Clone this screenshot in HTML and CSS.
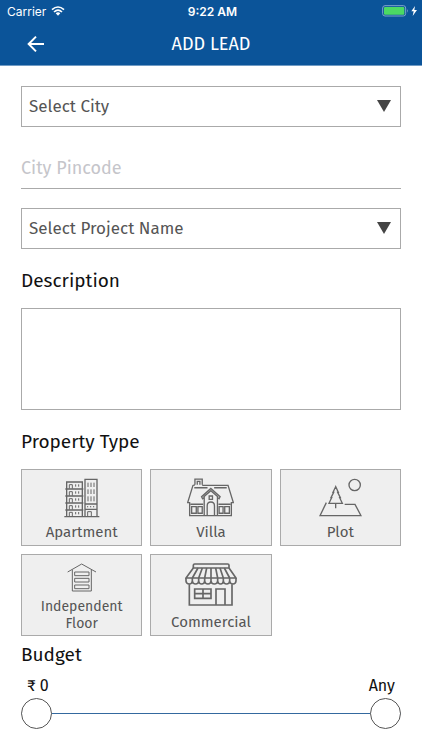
FILE: index.html
```
<!DOCTYPE html>
<html lang="en">
<head>
    <meta charset="UTF-8">
    <meta name="viewport" content="width=device-width, initial-scale=1.0">
    <title>Add Lead</title>
    <link rel="stylesheet" href="styles.css">
</head>
<body>
    <header class="app-header">
        <div class="status-bar">
            <div class="status-left">
                <span>Carrier</span>
                <svg class="wifi-icon" viewBox="0 0 42 30" aria-hidden="true">
                    <path d="M3 11 Q21 -5 39 11 M9 18 Q21 7 33 18" fill="none" stroke="#fff" stroke-width="5"/>
                    <path d="M14 22 Q21 16 28 22 L21 29 Z" fill="#fff"/>
                </svg>
            </div>
            <span class="status-time">9:22 AM</span>
            <div class="status-right">
                <svg class="battery-icon" viewBox="0 0 108 36" aria-hidden="true">
                    <rect x="2" y="2" width="69" height="31" rx="7" fill="none" stroke="#7fa3cc" stroke-width="3"/>
                    <rect x="6" y="6" width="61" height="23" rx="3" fill="#4cd964"/>
                    <path d="M75 12 Q80 17 75 23 Z" fill="#7fa3cc"/>
                    <path d="M99 3 L88 19 H95 L92 33 L105 15 H97 Z" fill="#fff"/>
                </svg>
            </div>
        </div>
        <div class="title-bar">
            <button type="button" class="back-button" aria-label="Back">
                <svg viewBox="0 0 54 54" aria-hidden="true">
                    <path d="M51 27 H5 M27 5 L5 27 L27 49" fill="none" stroke="#fff" stroke-width="6"/>
                </svg>
            </button>
            <h1>ADD LEAD</h1>
        </div>
    </header>

    <form class="lead-form">
        <select class="select-box" aria-label="City">
            <option>Select City</option>
        </select>
        <input class="pincode" type="text" placeholder="City Pincode" aria-label="City Pincode">
        <select class="select-box" aria-label="Project Name">
            <option>Select Project Name</option>
        </select>

        <label class="section-title" for="description">Description</label>
        <textarea class="description" id="description"></textarea>

        <h2 class="section-title">Property Type</h2>
        <div class="type-grid">
            <button type="button" class="type-card">
                <svg class="icon-apartment" viewBox="0 0 108 120" aria-hidden="true">
                    <path d="M8 116 V12 H55 V116 M63 116 V4 H99 V116"/>
                    <path d="M1 116 H106 M4 33 H58 M4 54 H58 M4 75 H58 M4 96 H58 M63 78 H99 M63 94 H99"/>
                    <path class="thin" d="M16 32 V20 H25 V32 M16 53 V41 H25 V53 M16 74 V62 H25 V74 M16 95 V83 H25 V95 M16 115 V103 H25 V115"/>
                    <path class="thin" d="M35 19 V26 M44 19 V26 M35 40 V47 M44 40 V47 M35 61 V68 M44 61 V68 M35 82 V89 M44 82 V89 M35 102 V109 M44 102 V109"/>
                    <path class="thin" d="M72 14 V27 M81 14 V27 M90 14 V27 M72 34 V48 M81 34 V48 M90 34 V48 M72 55 V70 M81 55 V70 M90 55 V70 M71 84 V88 M80 84 V88 M89 84 V88 M71 116 V101 H82 V116"/>
                </svg>
                <span>Apartment</span>
            </button>
            <button type="button" class="type-card">
                <svg class="icon-villa" viewBox="0 0 142 117" aria-hidden="true">
                    <path d="M24 20 V3 H46 V20 M31 20 V10 H39 V20 M24 20 L18 22 L2 74 H8 V113 H134 V74 H140 L124 22 H46"/>
                    <path d="M22 29 H62 M82 29 H120 M10 79 H49 M95 79 H132"/>
                    <path d="M52 113 V58 L47 62 L44 56 L72 31 L100 56 L97 62 L92 58 V113 M50 57 L72 38 L94 57"/>
                    <path d="M61 113 V84 Q61 72 72 72 Q83 72 83 84 V113 M67 54 H77 V64 H67 Z"/>
                    <path d="M14 86 H28 V106 H14 Z M33 86 H46 V106 H33 Z M97 86 H109 V106 H97 Z M114 86 H128 V106 H114 Z"/>
                </svg>
                <span>Villa</span>
            </button>
            <button type="button" class="type-card">
                <svg class="icon-plot" viewBox="0 0 129 117" aria-hidden="true">
                    <circle cx="107" cy="21" r="17"/>
                    <path d="M50 26 L42 43 H44 L36 59 H38 L30 76 H70 L62 59 H64 L56 43 H58 Z M50 76 V91"/>
                    <path d="M22 74 L3 113 H126 L108 79 H77"/>
                </svg>
                <span>Plot</span>
            </button>
            <button type="button" class="type-card">
                <svg class="icon-floor" viewBox="0 0 90 87" aria-hidden="true">
                    <path d="M2 27 L44 3 L87 27 M16 20 V84 H73 V20"/>
                    <path d="M23 27 H66 V38 H23 Z M23 46 H66 V57 H23 Z M23 66 H66 V77 H23 Z"/>
                </svg>
                <span class="two-line">Independent Floor</span>
            </button>
            <button type="button" class="type-card">
                <svg class="icon-shop" viewBox="0 0 156 129" aria-hidden="true">
                    <path d="M25 15 V7 Q25 3 29 3 H128 Q132 3 132 7 V15 Z"/>
                    <path d="M25 15 L3 45 H153 L132 15 M39 15 L22 45 M52 15 L41 45 M65 15 L59 45 M78 15 V45 M92 15 L98 45 M105 15 L115 45 M118 15 L134 45"/>
                    <path d="M3 45 V54 Q4 63 13 63 Q21 63 22 54 V45 M22 54 Q23 63 32 63 Q40 63 41 54 V45 M41 54 Q42 63 50 63 Q58 63 59 54 V45 M59 54 Q60 63 69 63 Q77 63 78 54 V45 M78 54 Q79 63 88 63 Q97 63 98 54 V45 M98 54 Q99 63 107 63 Q114 63 115 54 V45 M115 54 Q116 63 125 63 Q133 63 134 54 V45 M134 54 Q135 63 144 63 Q152 63 153 54 V45"/>
                    <path d="M13 64 V126 H141 V64 M29 78 H78 V106 H29 Z M29 92 H78 M54 78 V106 M93 126 V78 H120 V126"/>
                </svg>
                <span>Commercial</span>
            </button>
        </div>

        <h2 class="section-title budget-title">Budget</h2>
        <div class="budget-labels">
            <label for="budget-min">₹ 0</label>
            <label for="budget-max">Any</label>
        </div>
        <div class="budget-slider">
            <input type="range" id="budget-min" min="0" max="100" value="0">
            <input type="range" id="budget-max" min="0" max="100" value="100">
        </div>
    </form>
</body>
</html>
```

FILE: styles.css
```
* {
    box-sizing: border-box;
}
body {
    margin: 0;
    font-family: "Fira Sans", "Noto Sans", sans-serif;
    color: #111;
    background-color: #fff;
}
button, input, select, textarea {
    font-family: inherit;
}
.app-header {
    background-color: #0b5499;
    color: #fff;
    border-bottom: 1px solid #709bc4;
}
.status-bar {
    display: grid;
    grid-template-columns: 1fr auto 1fr;
    align-items: center;
    height: 22px;
    padding: 0 4px 0 7px;
    font-family: Inter, sans-serif;
    font-size: 12px;
}
.status-left {
    display: flex;
    align-items: center;
    gap: 5px;
}
.wifi-icon {
    width: 14px;
    height: 10px;
}
.status-time {
    font-weight: 600;
}
.status-right {
    display: flex;
    justify-content: flex-end;
}
.battery-icon {
    width: 36px;
    height: 12px;
}
.title-bar {
    display: grid;
    grid-template-columns: 72px 1fr 72px;
    align-items: center;
    height: 43px;
}
.back-button {
    display: flex;
    justify-content: center;
    padding: 8px;
    border: none;
    background: none;
    cursor: pointer;
}
.back-button svg {
    width: 18px;
    height: 18px;
}
h1 {
    margin: 0;
    font-size: 18px;
    font-weight: 400;
    line-height: 24px;
    text-align: center;
}
.lead-form {
    display: flex;
    flex-direction: column;
    padding: 20px 21px;
}
.select-box {
    height: 41px;
    padding: 0 9px 0 7px;
    border: 1px solid #aaa;
    border-radius: 0;
    appearance: none;
    color: #555;
    font-size: 17px;
    background: #fff url("data:image/svg+xml,%3Csvg xmlns='http://www.w3.org/2000/svg' width='14' height='12'%3E%3Cpath d='M0 0H14L7 12Z' fill='%23444'/%3E%3C/svg%3E") no-repeat right 9px top 13px;
}
.pincode {
    height: 42px;
    margin: 20px 0 19px;
    padding: 0;
    border: none;
    border-bottom: 1px solid #aaa;
    font-size: 18px;
    background: none;
}
.pincode::placeholder {
    color: #c5c5ca;
}
.section-title {
    margin: 18px 0 13px;
    font-size: 19px;
    font-weight: 400;
    line-height: 28px;
}
.description {
    height: 102px;
    padding: 8px;
    border: 1px solid #aaa;
    font-size: 17px;
    resize: none;
}
.type-grid {
    display: grid;
    grid-template-columns: repeat(3, 1fr);
    grid-template-rows: minmax(77px, auto) minmax(82px, auto);
    gap: 8px;
}
.type-card {
    display: flex;
    flex-direction: column;
    align-items: center;
    justify-content: space-between;
    padding: 8px 8px 3px;
    border: 1px solid #aaa;
    color: #555;
    background-color: #efefef;
    font-size: 15px;
    line-height: 20px;
    cursor: pointer;
}
.type-card svg {
    fill: none;
    stroke: #666;
    stroke-width: 4;
}
.type-card .thin {
    stroke-width: 3;
}
.type-card .two-line {
    font-size: 14px;
    line-height: 17px;
}
.icon-apartment {
    width: 36px;
    height: 40px;
}
.icon-villa {
    width: 47px;
    height: 39px;
}
.icon-plot {
    width: 43px;
    height: 39px;
}
.type-card .icon-floor {
    width: 30px;
    height: 29px;
    stroke-width: 3;
}
.type-card .icon-shop {
    width: 52px;
    height: 43px;
    stroke-width: 5;
}
.budget-title {
    margin: 5px 0;
}
.budget-labels {
    display: flex;
    justify-content: space-between;
    padding: 0 6px;
    font-size: 16px;
    line-height: 24px;
}
.budget-slider {
    display: grid;
    align-items: center;
    background: linear-gradient(#34699f, #34699f) no-repeat center / 100% 1px;
}
.budget-slider input {
    grid-area: 1 / 1;
    width: 100%;
    height: 31px;
    margin: 0;
    appearance: none;
    background: none;
    pointer-events: none;
}
.budget-slider input::-webkit-slider-thumb {
    appearance: none;
    width: 31px;
    height: 31px;
    border: 1px solid #555;
    border-radius: 50%;
    background-color: #fff;
    cursor: pointer;
    pointer-events: auto;
}
```
